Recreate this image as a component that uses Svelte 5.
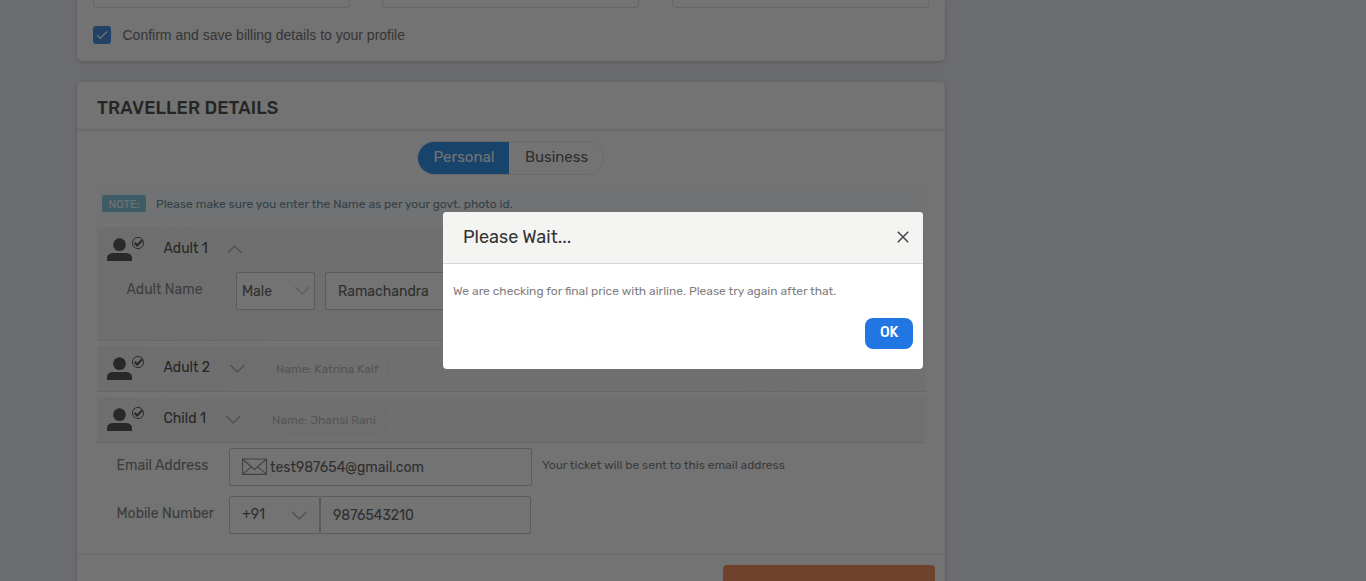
<script>
  const travellers = [
    { label: 'Adult 1', open: true, width: 45 },
    { label: 'Adult 2', name: 'Katrina Kaif', width: 47 },
    { label: 'Child 1', name: 'Jhansi Rani', width: 43 }
  ];
</script>

{#snippet chevron(up)}
  <svg class="chevron" class:up width="16" height="10" viewBox="0 0 16 10"><path d="M1.3 1L8.3 8L15.3 1" /></svg>
{/snippet}

<div class="page">
  <main>
    <section class="card billing">
      <div class="fields"><i></i><i></i><i></i></div>
      <label class="confirm">
        <span class="check"><svg width="18" height="18" viewBox="0 0 18 18"><path d="M4 9.2L7.3 12.4L14 5.5" /></svg></span>
        Confirm and save billing details to your profile
      </label>
    </section>

    <section class="card traveller">
      <h2>TRAVELLER DETAILS</h2>
      <div class="tabs">
        <button class="active">Personal</button><button>Business</button>
      </div>
      <div class="note"><b>NOTE:</b><span>Please make sure you enter the Name as per your govt. photo id.</span></div>

      {#each travellers as t}
        <div class="panel" class:open={t.open}>
          <div class="row">
            <svg class="person" width="38" height="26" viewBox="0 0 38 26">
              <circle cx="12.5" cy="7.7" r="6.4" />
              <path d="M0 24V21C0 17.8 3 16.1 6 16.1H19C22 16.1 25 17.8 25 21V24Z" />
              <circle class="ring" cx="31" cy="6" r="5.6" />
              <path class="tick" d="M27.6 5.9L30.2 8.4L35.2 3.2" />
            </svg>
            <span class="label" style="width:{t.width}px">{t.label}</span>
            {@render chevron(t.open)}
            {#if t.name}<span class="pill">Name: {t.name}</span>{/if}
          </div>
          {#if t.open}
            <div class="names">
              <span class="caption">Adult Name</span>
              <div class="box title"><span>Male</span>{@render chevron(false)}</div>
              <div class="box first">Ramachandra</div>
            </div>
          {/if}
        </div>
      {/each}

      <div class="contact">
        <div class="line">
          <span class="caption">Email Address</span>
          <div class="box email">
            <svg width="26" height="18" viewBox="0 0 26 18"><path d="M.5 1H24.5V16.4H.5ZM.5 1L12.5 11.5L24.5 1M.5 16.4L9.3 8.8M24.5 16.4L15.7 8.8" /></svg>
            <span>test987654@gmail.com</span>
          </div>
          <span class="hint">Your ticket will be sent to this email address</span>
        </div>
        <div class="line">
          <span class="caption">Mobile Number</span>
          <div class="box code"><span>+91</span>{@render chevron(false)}</div>
          <div class="box mobile">9876543210</div>
        </div>
      </div>
      <footer><div class="continue"></div></footer>
    </section>
  </main>

  <div class="overlay">
    <div class="dialog" role="dialog">
      <header>
        <h3>Please Wait...</h3>
        <svg width="12" height="12" viewBox="0 0 12 12"><path d="M.8.8L11.2 11.2M11.2.8L.8 11.2" /></svg>
      </header>
      <p>We are checking for final price with airline. Please try again after that.</p>
      <button class="ok">OK</button>
    </div>
  </div>
</div>

<style>
  :global(body) { margin: 0; overflow: hidden; }
  * { box-sizing: border-box; }
  .page { position: relative; height: 581px; overflow: hidden; background: #eeeff8; font: 14px/20px Rubik, Roboto, sans-serif; color: #666; }
  main { width: 868px; margin-left: 77px; }
  .card { background: #fff; box-shadow: 0 1px 4px rgba(0,0,0,.2); }
  .billing { height: 61px; border-radius: 0 0 5px 5px; padding: 0 16px; }
  .fields { display: grid; grid-template-columns: 257px 257px 257px; column-gap: 32.4px; height: 8px; }
  .fields i { border: 1px solid #e2e2e2; border-top: 0; border-radius: 0 0 4px 4px; }
  .confirm { display: flex; align-items: center; gap: 11.5px; margin-top: 17px; font-family: "Liberation Sans", sans-serif; color: #777; }
  .check { width: 18px; height: 18px; border-radius: 3px; background: #4a90e2; }
  .check svg { display: block; fill: none; stroke: #fff; stroke-width: 1.2; }
  .traveller { margin-top: 21px; height: 520px; border-radius: 5px 5px 0 0; }
  h2 { margin: 0; height: 49px; padding: 16px 20px 0; border-bottom: 2px solid #ececec; font-size: 18px; line-height: 20px; font-weight: 500; letter-spacing: .12px; color: #525252; }
  .tabs { display: flex; width: 187px; height: 34px; margin: 10px 0 0 340px; border: 1px solid #ebebeb; border-radius: 17px; overflow: hidden; }
  .tabs button { padding: 0 0 2px 1px; border: 0; background: none; font: 15px/20px Rubik, Roboto, sans-serif; color: #676767; width: 94px; }
  .tabs .active { background: #3594ed; color: #fff; width: 91px; }
  .note { display: flex; align-items: center; gap: 10px; height: 27px; margin: 15px 20px 0; padding-left: 5px; background: #fafdff; font-size: 12px; color: #6f90a4; }
  .note b { width: 44px; height: 17px; border-radius: 2px; background: #87cce1; color: #fff; font-size: 11px; line-height: 19px; font-weight: 400; text-align: center; margin-top: -1px; }
  .panel { margin: 5px 20px 0; height: 46px; border-bottom: 1px solid #e4e4e4; background: linear-gradient(90deg, #f4f4f4, #f8f8f8); }
  .panel.open { height: 114px; margin-top: 10px; }
  .row { display: flex; align-items: center; height: 45px; padding: 0 0 1px 10px; }
  .person { fill: #5c5c5c; margin-right: 18.5px; position: relative; top: 1px; }
  .ring { fill: none; stroke: #666; stroke-width: 1; }
  .tick { fill: none; stroke: #5c5c5c; stroke-width: 2.2; }
  .label { color: #565656; margin-right: 18.5px; white-space: nowrap; }
  .chevron { fill: none; stroke: #b2b2b2; stroke-width: 1.4; flex: none; }
  .up { transform: rotate(180deg); }
  .row .chevron { margin-top: 2px; }
  .row .up { margin-top: 0; }
  .pill { height: 27px; margin-left: 20px; padding: 0 9px 0 10px; border: 1px solid #ededed; border-radius: 4px; font-size: 12px; line-height: 26px; color: #bcbcbc; }
  .names { display: flex; }
  .names .caption { width: 139px; padding: 8px 0 0 29.5px; color: #888; }
  .box { display: flex; align-items: center; height: 38px; padding-top: 2px; border: 1px solid #c9c9c9; border-radius: 2px; background: #fff; color: #686868; }
  .title { width: 79px; padding: 2px 4px 0 5px; justify-content: space-between; }
  .title .chevron { stroke: #d0d0d0; margin-top: -3px; }
  .first { width: 220px; margin-left: 10px; padding-left: 12px; }
  .contact { padding: 5px 0 0 39.5px; }
  .line { display: flex; height: 48px; }
  .line .caption { width: 112.5px; padding-top: 8px; color: #838383; }
  .email { width: 303px; padding-left: 12px; gap: 2px; }
  .email svg { fill: none; stroke: #909090; stroke-width: 1.1; margin-top: -2px; }
  .hint { padding: 7px 0 0 10px; font-size: 12px; color: #838383; }
  .code { width: 91px; padding: 2px 12px 0; justify-content: space-between; }
  .code span { margin-top: -2px; }
  .mobile { width: 211px; padding-left: 12px; }
  footer { display: flex; justify-content: flex-end; margin-top: 10px; padding: 10px 10px 0; border-top: 1px solid #e8e8e8; }
  .continue { width: 212px; height: 40px; border-radius: 4px; background: #f69265; }
  .overlay { position: absolute; inset: 0; display: flex; align-items: center; justify-content: center; background: rgba(0,0,0,.55); }
  .dialog { display: flex; flex-direction: column; width: 480px; height: 157px; border-radius: 4px; background: #fff; overflow: hidden; }
  header { display: flex; align-items: center; justify-content: space-between; height: 52px; padding: 0 14px 2px 20px; background: #f4f4f2; border-bottom: 1px solid #d8d8d8; }
  h3 { margin: 0; font-size: 18px; font-weight: 400; color: #333; }
  header svg { fill: none; stroke: #4a4a4a; stroke-width: 1.6; }
  p { margin: 17px 10px 0; font-size: 12px; color: #808080; }
  .ok { align-self: flex-end; width: 48px; height: 31px; margin: 17px 10px 0 0; padding: 0 0 2px; border: 0; border-radius: 8px; background: #2276e3; color: #fff; font: 500 14px/20px Rubik, Roboto, sans-serif; letter-spacing: -.2px; }
</style>
